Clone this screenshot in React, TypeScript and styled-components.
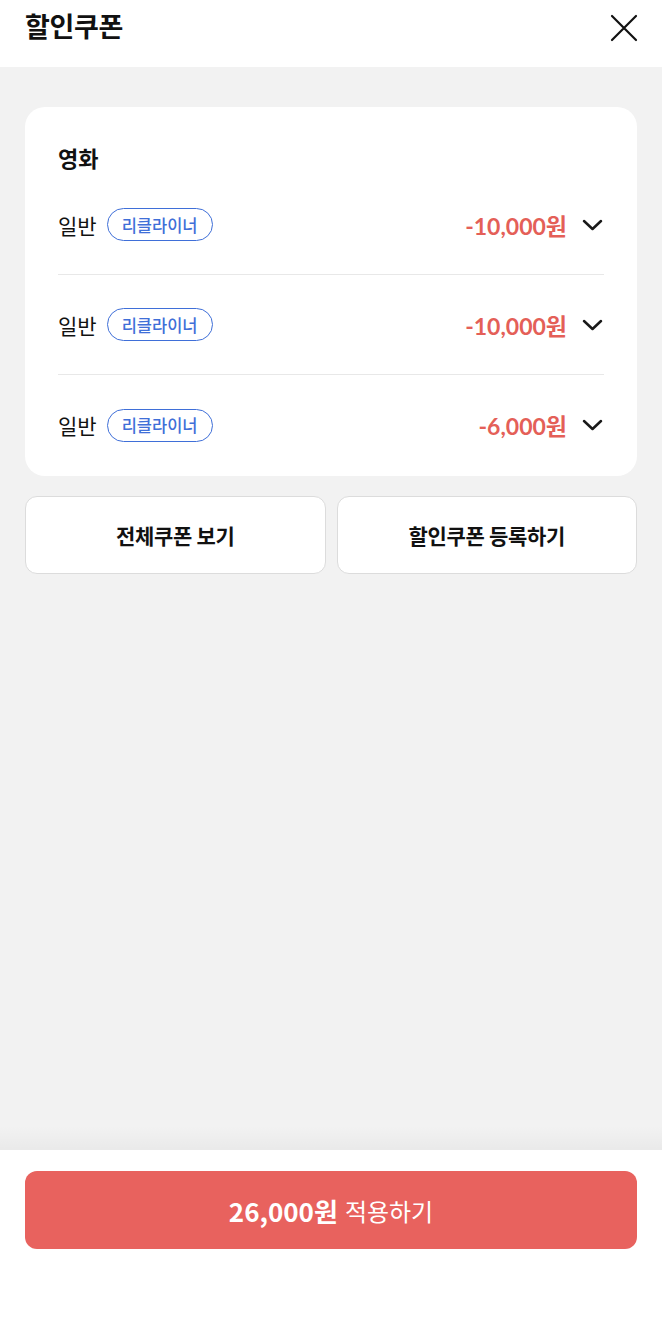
import React from "react";
import styled, { createGlobalStyle } from "styled-components";

const GlobalStyle = createGlobalStyle`
  html, body { margin: 0; padding: 0; }
  body {
    font-family: "Noto Sans CJK KR", "Noto Sans", sans-serif;
    background: #ffffff;
    color: #111;
  }
  * { box-sizing: border-box; }
`;

const Page = styled.div`
  display: flex;
  flex-direction: column;
  height: 1326px;
  background: #f2f2f2;
`;

const Header = styled.header`
  height: 67px;
  flex: none;
  background: #fff;
  display: flex;
  justify-content: space-between;
  align-items: flex-start;
  padding: 6px 24px 0 25px;
`;

const Title = styled.h1`
  margin: 0;
  font-size: 27px;
  font-weight: 700;
  line-height: 40px;
  letter-spacing: -0.3px;
  color: #111;
`;

const CloseButton = styled.button`
  border: none;
  background: none;
  padding: 0;
  margin-top: 8px;
  width: 28px;
  height: 28px;
  display: flex;
  align-items: center;
  justify-content: center;
  cursor: pointer;
`;

const Content = styled.main`
  flex: 1;
  padding: 40px 25px 0;
  display: flex;
  flex-direction: column;
  gap: 20px;
`;

const Card = styled.section`
  background: #fff;
  border-radius: 20px;
  padding: 34px 33px 0;
  height: 369px;
`;

const SectionTitle = styled.h2`
  margin: 0 0 2px;
  font-size: 22px;
  font-weight: 700;
  line-height: 32px;
  color: #111;
`;

const RowList = styled.div`
  display: flex;
  flex-direction: column;
`;

const Row = styled.div<{ $last?: boolean }>`
  display: flex;
  align-items: center;
  height: 100px;
  border-bottom: ${(p) => (p.$last ? "none" : "1px solid #e8e8e8")};
`;

const Label = styled.span`
  font-size: 21px;
  font-weight: 400;
  color: #111;
  margin-right: 10px;
`;

const Pill = styled.span`
  display: inline-flex;
  align-items: center;
  justify-content: center;
  height: 33px;
  padding: 0 14px;
  border: 1.5px solid #3f6fd8;
  border-radius: 17px;
  color: #3f6fd8;
  font-size: 16.5px;
  font-weight: 500;
`;

const Amount = styled.span`
  margin-left: auto;
  color: #e45f58;
  font-family: "Lato", "Noto Sans CJK KR", sans-serif;
  font-size: 23px;
  font-weight: 700;
`;

const Chevron = styled.span`
  display: flex;
  align-items: center;
  margin-left: 15px;
  width: 22px;
`;

const ButtonRow = styled.div`
  display: grid;
  grid-template-columns: 1fr 1fr;
  gap: 11px;
`;

const OutlineButton = styled.button`
  height: 78px;
  background: #fff;
  border: 1.5px solid #dcdcdc;
  border-radius: 12px;
  font-family: inherit;
  font-size: 21px;
  font-weight: 700;
  letter-spacing: -0.3px;
  color: #111;
  cursor: pointer;
`;

const Footer = styled.footer`
  flex: none;
  height: 176px;
  background: #fff;
  padding: 21px 25px 0;
  position: relative;
  &::before {
    content: "";
    position: absolute;
    left: 0;
    right: 0;
    top: -24px;
    height: 24px;
    background: linear-gradient(to bottom, rgba(0,0,0,0), rgba(0,0,0,0.035));
  }
`;

const ApplyButton = styled.button`
  width: 100%;
  height: 78px;
  border: none;
  border-radius: 12px;
  background: #e8625e;
  color: #fff;
  font-family: inherit;
  font-size: 24px;
  display: flex;
  align-items: center;
  justify-content: center;
  gap: 7px;
  cursor: pointer;
`;

const Strong = styled.span`
  font-weight: 700;
  font-size: 26px;
`;

const Light = styled.span`
  font-weight: 400;
`;

const coupons = [
  { label: "일반", tag: "리클라이너", amount: "-10,000원" },
  { label: "일반", tag: "리클라이너", amount: "-10,000원" },
  { label: "일반", tag: "리클라이너", amount: "-6,000원" },
];

const ChevronIcon = () => (
  <svg width="22" height="14" viewBox="0 0 22 14" fill="none">
    <path d="M2 3 L10.5 11 L19 3" stroke="#1a1a1a" strokeWidth="2.5" strokeLinecap="round" strokeLinejoin="round" />
  </svg>
);

export default function App() {
  return (
    <>
      <GlobalStyle />
      <Page>
        <Header>
          <Title>할인쿠폰</Title>
          <CloseButton aria-label="닫기">
            <svg width="28" height="28" viewBox="0 0 28 28" fill="none">
              <path d="M2 2 L26 26 M26 2 L2 26" stroke="#111" strokeWidth="2.2" strokeLinecap="round" />
            </svg>
          </CloseButton>
        </Header>
        <Content>
          <Card>
            <SectionTitle>영화</SectionTitle>
            <RowList>
              {coupons.map((c, i) => (
                <Row key={i} $last={i === coupons.length - 1}>
                  <Label>{c.label}</Label>
                  <Pill>{c.tag}</Pill>
                  <Amount>{c.amount}</Amount>
                  <Chevron>
                    <ChevronIcon />
                  </Chevron>
                </Row>
              ))}
            </RowList>
          </Card>
          <ButtonRow>
            <OutlineButton>전체쿠폰 보기</OutlineButton>
            <OutlineButton>할인쿠폰 등록하기</OutlineButton>
          </ButtonRow>
        </Content>
        <Footer>
          <ApplyButton>
            <Strong>26,000원</Strong>
            <Light>적용하기</Light>
          </ApplyButton>
        </Footer>
      </Page>
    </>
  );
}
